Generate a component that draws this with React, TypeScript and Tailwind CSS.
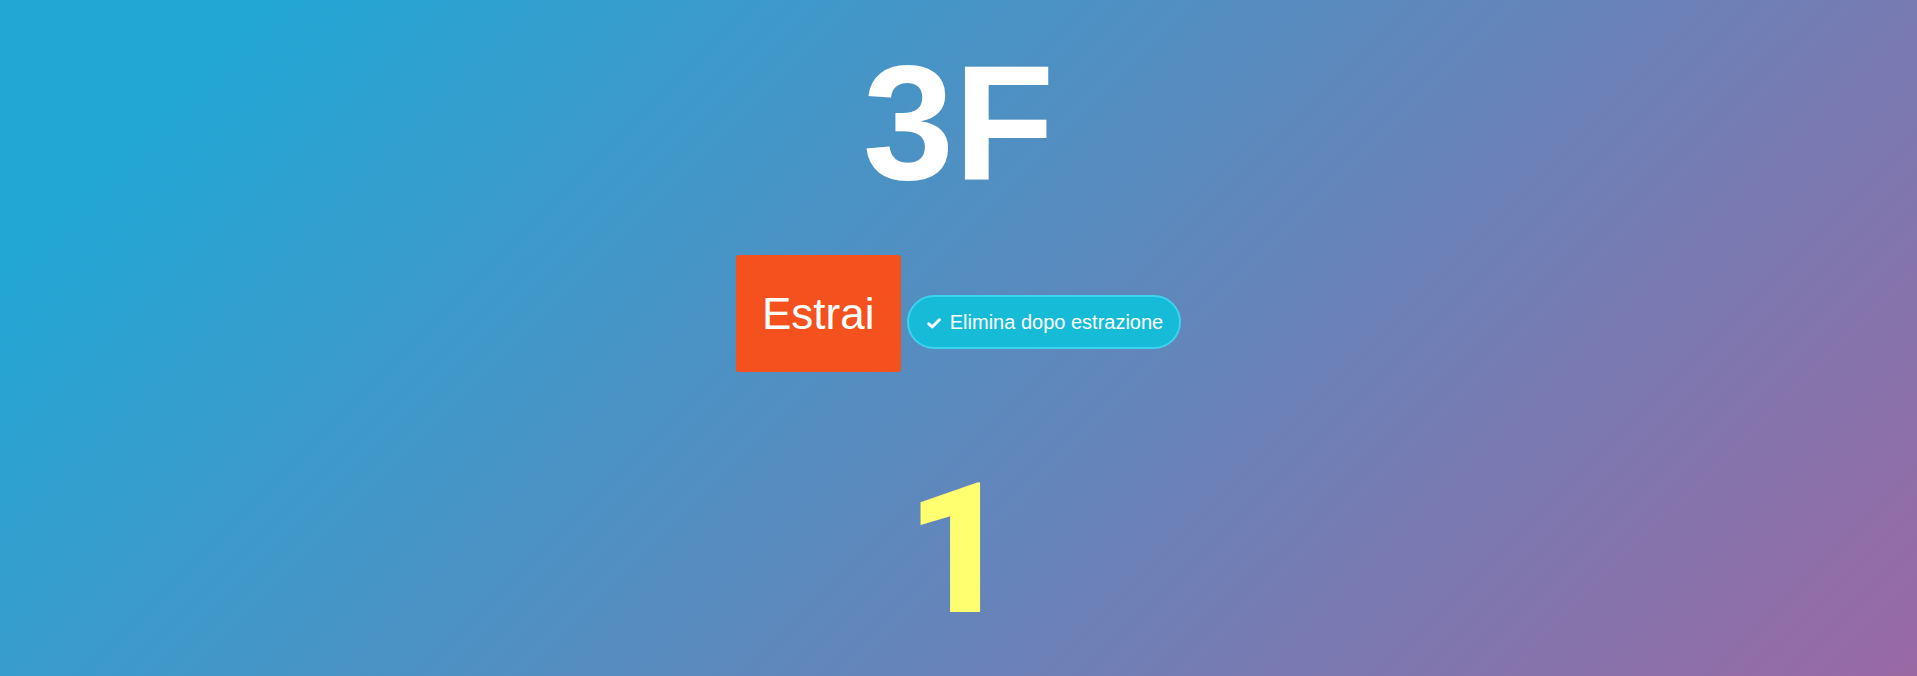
import React from "react";

export default function App() {
  return (
    <div
      className="h-screen w-full overflow-hidden bg-[linear-gradient(135deg,#22a7d5_10%,#9a69a4_100%)] flex flex-col items-center"
      style={{ fontFamily: '"Liberation Sans", Arial, sans-serif' }}
    >
      <div className="mt-[41px] text-[164px] leading-none font-bold text-white">3F</div>
      <div className="mt-[50px] flex items-baseline gap-[6px]">
        <div className="w-[165px] h-[117px] rounded-[3px] bg-[#f4511e] text-white text-[44px] leading-none flex items-center justify-center">
          Estrai
        </div>
        <div className="h-[54px] pl-[18px] pr-[16px] rounded-full bg-[#16bbd8] border-2 border-[#3cd3ee] text-white text-[20px] leading-none flex items-center">
          <svg viewBox="0 0 14 11" className="w-[14px] h-[11px] mr-[9px] mt-[3px]">
            <polyline
              points="1.8,5.8 5.2,9 12.4,1.8"
              fill="none"
              stroke="white"
              strokeWidth="3"
              strokeLinecap="round"
              strokeLinejoin="round"
            />
          </svg>
          <span>Elimina dopo estrazione</span>
        </div>
      </div>
      <div
        className="mt-[87px] text-[182px] leading-none font-black text-[#ffff70]"
        style={{ fontFamily: 'Roboto, "Liberation Sans", sans-serif' }}
      >
        1
      </div>
    </div>
  );
}
